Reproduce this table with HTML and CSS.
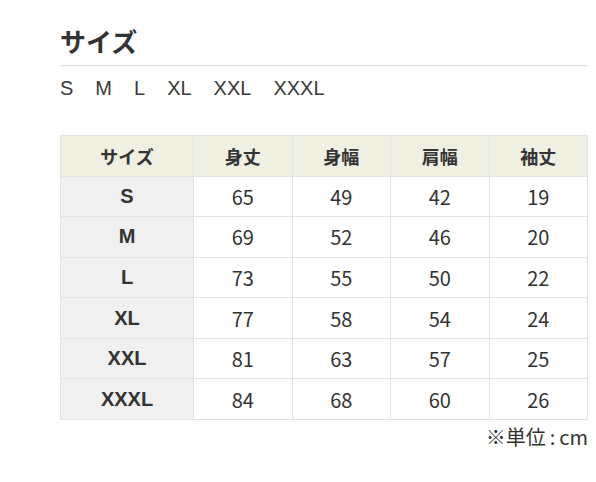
FILE: index.html
```html
<!DOCTYPE html>
<html lang="ja">
<head>
<meta charset="utf-8">
<link rel="stylesheet" href="styles.css">
</head>
<body>
<div class="wrap">
  <h2 class="title">サイズ</h2>
  <p class="sizes"><span>S</span><span>M</span><span>L</span><span>XL</span><span>XXL</span><span>XXXL</span></p>
  <table class="chart">
    <thead>
      <tr><th>サイズ</th><th>身丈</th><th>身幅</th><th>肩幅</th><th>袖丈</th></tr>
    </thead>
    <tbody>
      <tr><th>S</th><td>65</td><td>49</td><td>42</td><td>19</td></tr>
      <tr><th>M</th><td>69</td><td>52</td><td>46</td><td>20</td></tr>
      <tr><th>L</th><td>73</td><td>55</td><td>50</td><td>22</td></tr>
      <tr><th>XL</th><td>77</td><td>58</td><td>54</td><td>24</td></tr>
      <tr><th>XXL</th><td>81</td><td>63</td><td>57</td><td>25</td></tr>
      <tr><th>XXXL</th><td>84</td><td>68</td><td>60</td><td>26</td></tr>
    </tbody>
  </table>
  <p class="note">※単位<span class="colon">:</span>cm</p>
</div>
</body>
</html>
```
FILE: styles.css
```css
html, body { margin: 0; padding: 0; background: #fff; }
body {
  font-family: "Liberation Sans", "Noto Sans CJK JP", sans-serif;
  color: #333;
}
.wrap { width: 528px; margin-left: 60px; padding-top: 23px; }
.title {
  margin: 0;
  font-family: "Noto Sans CJK JP", sans-serif;
  font-size: 26px;
  font-weight: 700;
  line-height: 36px;
  padding-bottom: 6px;
  border-bottom: 1px solid #ddd;
  color: #333;
}
.sizes {
  margin: 10px 0 0;
  font-size: 20px;
  line-height: 24px;
  display: flex;
  gap: 22px;
  color: #3a3a3a;
}
.chart {
  margin-top: 35px;
  width: 528px;
  border-collapse: collapse;
  table-layout: fixed;
}
.chart th, .chart td {
  border: 1px solid #e3e3e3;
  text-align: center;
  height: 39.57px;
  padding: 0;
  font-size: 20px;
}
.chart thead th {
  background: #efefe2;
  font-family: "Noto Sans CJK JP", sans-serif;
  font-weight: 700;
  font-size: 18px;
  color: #333;
}
.chart thead th:first-child { width: 132px; }
.chart tbody th {
  background: #f0f0f0;
  font-weight: 700;
  font-size: 20px;
  color: #333;
}
.chart td {
  font-family: "Noto Sans CJK JP", sans-serif;
  font-weight: 400;
  color: #333;
}
.note {
  margin: 4px 0 0;
  text-align: right;
  font-family: "Noto Sans CJK JP", sans-serif;
  font-size: 20px;
  line-height: 26px;
}
.colon { margin: 0 4px; }
```
